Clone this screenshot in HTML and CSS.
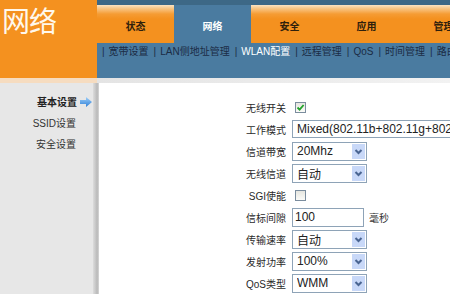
FILE: index.html
```html
<!DOCTYPE html>
<html lang="zh-CN">
<head>
  <meta charset="UTF-8">
  <title>网络 - WLAN配置</title>
  <link rel="stylesheet" href="styles.css">
</head>
<body>
  <div class="header">
    <div class="logo">网络</div>
    <div class="nav">
      <div class="nav-top"></div>
      <div class="tabs">
        <div class="tab">状态</div>
        <div class="tab active">网络</div>
        <div class="tab">安全</div>
        <div class="tab">应用</div>
        <div class="tab">管理</div>
      </div>
      <div class="subnav">
        <span class="sep">|</span><a>宽带设置</a>
        <span class="sep">|</span><a>LAN侧地址管理</a>
        <span class="sep">|</span><a class="on">WLAN配置</a>
        <span class="sep">|</span><a>远程管理</a>
        <span class="sep">|</span><a>QoS</a>
        <span class="sep">|</span><a>时间管理</a>
        <span class="sep">|</span><a>路由配置</a>
      </div>
    </div>
  </div>
  <div class="strip"></div>
  <div class="main">
    <div class="side">
      <div class="side-item current">
        <span>基本设置</span>
        <svg class="side-arrow" width="12" height="10" viewBox="0 0 12 10">
          <defs>
            <linearGradient id="ag" x1="0" y1="0" x2="0" y2="1">
              <stop offset="0" stop-color="#9fd0fa"/>
              <stop offset="1" stop-color="#2f7fd6"/>
            </linearGradient>
          </defs>
          <polygon points="0,3 6,3 6,0 12,5 6,10 6,7 0,7" fill="url(#ag)"/>
        </svg>
      </div>
      <div class="side-item"><span>SSID设置</span><i class="slot"></i></div>
      <div class="side-item"><span>安全设置</span><i class="slot"></i></div>
    </div>
    <div class="side-edge"></div>
    <div class="content">
      <div class="form">
        <label>无线开关</label>
        <div class="field">
          <span class="check">
            <svg width="9" height="9" viewBox="0 0 9 9"><path d="M1.5 4.5 L3.6 6.6 L7.6 2" fill="none" stroke="#22a32a" stroke-width="1.8"/></svg>
          </span>
        </div>

        <label>工作模式</label>
        <div class="field"><div class="sel wide"><span>Mixed(802.11b+802.11g+802.11n)</span><i class="drop"></i></div></div>

        <label>信道带宽</label>
        <div class="field"><div class="sel"><span>20Mhz</span><i class="drop"></i></div></div>

        <label>无线信道</label>
        <div class="field"><div class="sel"><span>自动</span><i class="drop"></i></div></div>

        <label>SGI使能</label>
        <div class="field"><span class="check"></span></div>

        <label>信标间隙</label>
        <div class="field"><input class="txt" type="text" value="100"><span class="unit">毫秒</span></div>

        <label>传输速率</label>
        <div class="field"><div class="sel"><span>自动</span><i class="drop"></i></div></div>

        <label>发射功率</label>
        <div class="field"><div class="sel"><span>100%</span><i class="drop"></i></div></div>

        <label>QoS类型</label>
        <div class="field"><div class="sel"><span>WMM</span><i class="drop"></i></div></div>
      </div>
    </div>
  </div>
</body>
</html>
```

FILE: styles.css
```css
* {
  margin: 0;
  padding: 0;
  box-sizing: border-box;
}
html, body {
  height: 100%;
  overflow: hidden;
}
body {
  display: flex;
  flex-direction: column;
  font-family: 'Liberation Sans', 'Noto Sans CJK SC', sans-serif;
  font-size: 10px;
  color: #333;
  background: #fff;
}
.header {
  display: flex;
  height: 78px;
  flex: 0 0 78px;
}
.logo {
  flex: 0 0 97px;
  background: #f4911f;
  color: #fff8ec;
  font-family: 'Noto Sans CJK SC', sans-serif;
  font-size: 28px;
  line-height: 34px;
  padding: 3px 0 0 2px;
  letter-spacing: -1px;
}
.nav {
  flex: 1;
  display: flex;
  flex-direction: column;
  background: #4a7ba0;
  overflow: hidden;
}
.nav-top {
  height: 5px;
  background: #3d6886;
}
.tabs {
  display: flex;
  height: 38px;
}
.tab {
  flex: 0 0 77px;
  text-align: center;
  font-weight: bold;
  color: #2e200c;
  padding-top: 6px;
  line-height: 32px;
  background: linear-gradient(#fbe4c4 0, #f9c98c 3px, #f59c34 9px, #f4911f 14px, #f4911f);
}
.tab.active {
  background: #4a7ba0;
  color: #fff;
}
.subnav {
  display: flex;
  align-items: flex-start;
  height: 35px;
  padding: 2px 0 0 5px;
  white-space: nowrap;
  line-height: 14px;
  color: #1b2c45;
}
.subnav .sep {
  margin: 0 4px 0 0;
  color: #1b2c45;
}
.subnav a {
  margin-right: 5px;
}
.subnav a.on {
  color: #fff;
}
.strip {
  flex: 0 0 5px;
  background: linear-gradient(to right, #f6dcc0 0, #f6dcc0 97px, #e4e4e4 97px, #f2f2f2);
}
.main {
  flex: 1;
  display: flex;
}
.side {
  flex: 0 0 93px;
  background: #e7e7e7;
  padding-top: 8px;
}
.side-item {
  display: flex;
  justify-content: flex-end;
  align-items: center;
  gap: 1px;
  height: 21px;
  padding-right: 1px;
}
.side-item.current span {
  font-weight: bold;
  color: #222;
}
.side-item .slot {
  width: 12px;
}
.side-item span {
  margin-right: 2px;
}
.side-item:not(.current) span {
  margin-right: 3px;
}
.side-edge {
  flex: 0 0 6px;
  background: linear-gradient(to right, #dcdcdc, #b9b9b9 70%, #d8d8d8);
}
.content {
  flex: 1;
  background: #fff;
  padding-top: 13px;
}
.form {
  display: grid;
  grid-template-columns: 187px 1fr;
  grid-auto-rows: 22px;
  column-gap: 6px;
  align-items: center;
}
.form label {
  text-align: right;
  white-space: nowrap;
  color: #2a2a2a;
}
.field {
  display: flex;
  align-items: center;
  white-space: nowrap;
}
.check {
  display: flex;
  align-items: center;
  justify-content: center;
  width: 11px;
  height: 11px;
  margin-left: 3px;
  border: 1px solid #7b8d9e;
  background: linear-gradient(#e6e6e0, #fbfbf8);
}
.sel {
  display: flex;
  align-items: center;
  width: 75px;
  height: 19px;
  border: 1px solid #8ea3b7;
  background: #fff;
  font-size: 12px;
  color: #222;
  padding-left: 4px;
}
.sel.wide {
  width: 260px;
  height: 18px;
}
.sel span {
  flex: 1;
  overflow: hidden;
}
.drop {
  flex: 0 0 13px;
  height: 15px;
  margin-right: 1px;
  background: #c8d8f8 url("data:image/svg+xml,%3Csvg xmlns='http://www.w3.org/2000/svg' width='13' height='15'%3E%3Cpath d='M3.5 6 L6.5 9 L9.5 6' fill='none' stroke='%234a6592' stroke-width='2'/%3E%3C/svg%3E") no-repeat center;
}
.txt {
  width: 72px;
  height: 19px;
  border: 1px solid #8ea3b7;
  font-family: 'Liberation Sans', sans-serif;
  font-size: 12px;
  color: #222;
  padding-left: 2px;
  outline: none;
}
.unit {
  margin-left: 5px;
}
```
